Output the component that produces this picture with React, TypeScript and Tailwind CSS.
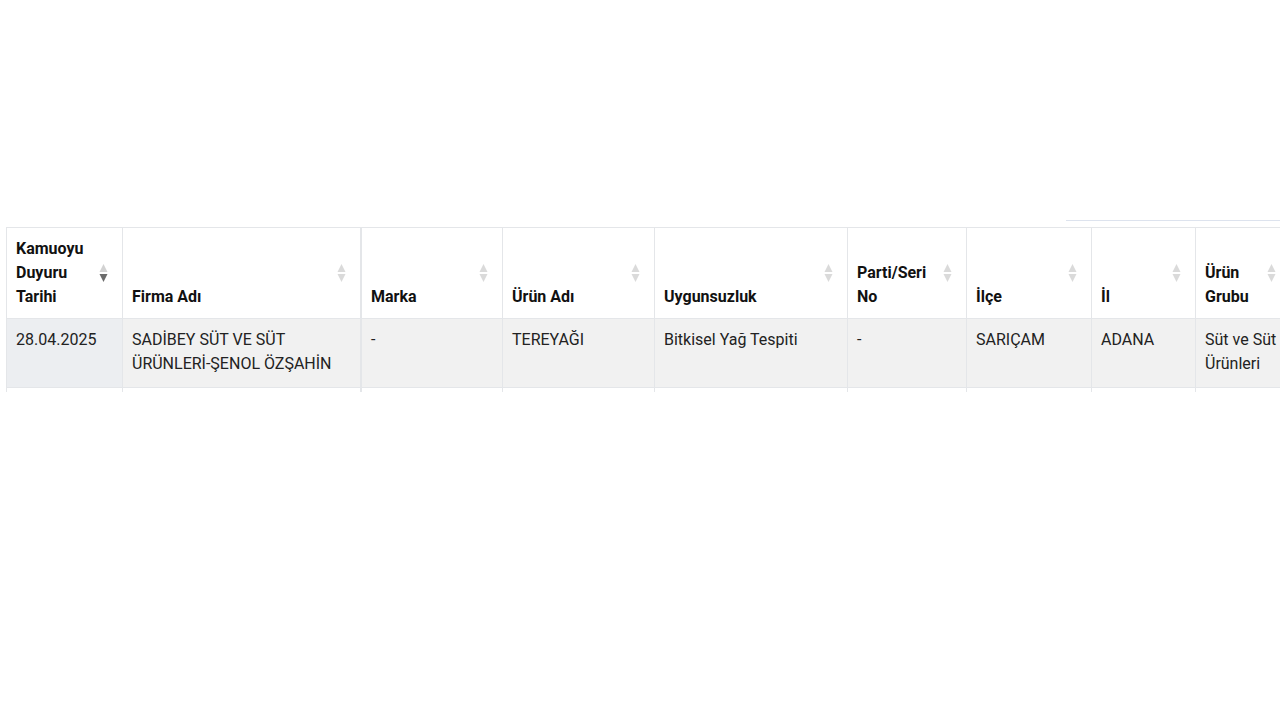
import React from "react";

const cols = [
  { w: 116, label: "Kamuoyu Duyuru Tarihi", active: true },
  { w: 239, label: "Firma Adı" },
  { w: 141, label: "Marka" },
  { w: 152, label: "Ürün Adı" },
  { w: 193, label: "Uygunsuzluk" },
  { w: 119, label: "Parti/Seri No" },
  { w: 125, label: "İlçe" },
  { w: 104, label: "İl" },
  { w: 95, label: "Ürün Grubu" },
];

const row = [
  "28.04.2025",
  "SADİBEY SÜT VE SÜT ÜRÜNLERİ-ŞENOL ÖZŞAHİN",
  "-",
  "TEREYAĞI",
  "Bitkisel Yağ Tespiti",
  "-",
  "SARIÇAM",
  "ADANA",
  "Süt ve Süt Ürünleri",
];

function SortIcon({ active }: { active?: boolean }) {
  return (
    <svg width="9" height="18" viewBox="0 0 9 18" className="block">
      <path d="M0.5 8 L4.5 0 L8.5 8 Z" fill={active ? "#d2d2d2" : "#dadada"} />
      <path d="M0.5 10 L4.5 18 L8.5 10 Z" fill={active ? "#6b6b6b" : "#dadada"} />
    </svg>
  );
}

export default function App() {
  return (
    <div
      className="min-h-[720px] bg-white pt-[220px]"
      style={{ fontFamily: "Roboto, 'Noto Sans', sans-serif" }}
    >
      <div className="flex justify-end">
        <div className="h-px w-[214px] bg-[#dde3ee]" />
      </div>
      <div className="ml-[6px] mt-[6px] h-[165px] overflow-hidden border-l border-t border-[#e4e6e9]">
        <table
          className="table-fixed border-separate border-spacing-0 text-[16px] leading-[24px]"
          style={{ width: 1284 }}
        >
          <colgroup>
            {cols.map((c, i) => (
              <col key={i} style={{ width: c.w }} />
            ))}
          </colgroup>
          <thead>
            <tr>
              {cols.map((c, i) => (
                <th
                  key={i}
                  className={`relative border-b border-[#e4e6e9] pb-[9px] pl-[9px] pr-[30px] pt-[9px] text-left align-bottom font-bold text-[#111] ${
                    i === 1 ? "border-r-2" : "border-r"
                  } border-r-[#e4e6e9]`}
                >
                  <div className="min-h-[72px] flex items-end">
                    <span>{c.label}</span>
                  </div>
                  <div className="absolute right-[14px] top-[36px]">
                    <SortIcon active={c.active} />
                  </div>
                </th>
              ))}
            </tr>
          </thead>
          <tbody>
            <tr>
              {row.map((v, i) => (
                <td
                  key={i}
                  className={`border-b border-[#e4e6e9] pb-[11px] pl-[9px] pr-[10px] pt-[9px] align-top text-[#222] ${
                    i === 0 ? "bg-[#eceef1]" : "bg-[#f1f1f1]"
                  } ${i === 1 ? "border-r-2" : "border-r"} border-r-[#e4e6e9]`}
                >
                  <div className="min-h-[48px]">{v}</div>
                </td>
              ))}
            </tr>
            <tr>
              {row.map((_, i) => (
                <td
                  key={i}
                  className={`h-[60px] bg-white ${
                    i === 1 ? "border-r-2" : "border-r"
                  } border-r-[#e4e6e9]`}
                />
              ))}
            </tr>
          </tbody>
        </table>
      </div>
    </div>
  );
}
